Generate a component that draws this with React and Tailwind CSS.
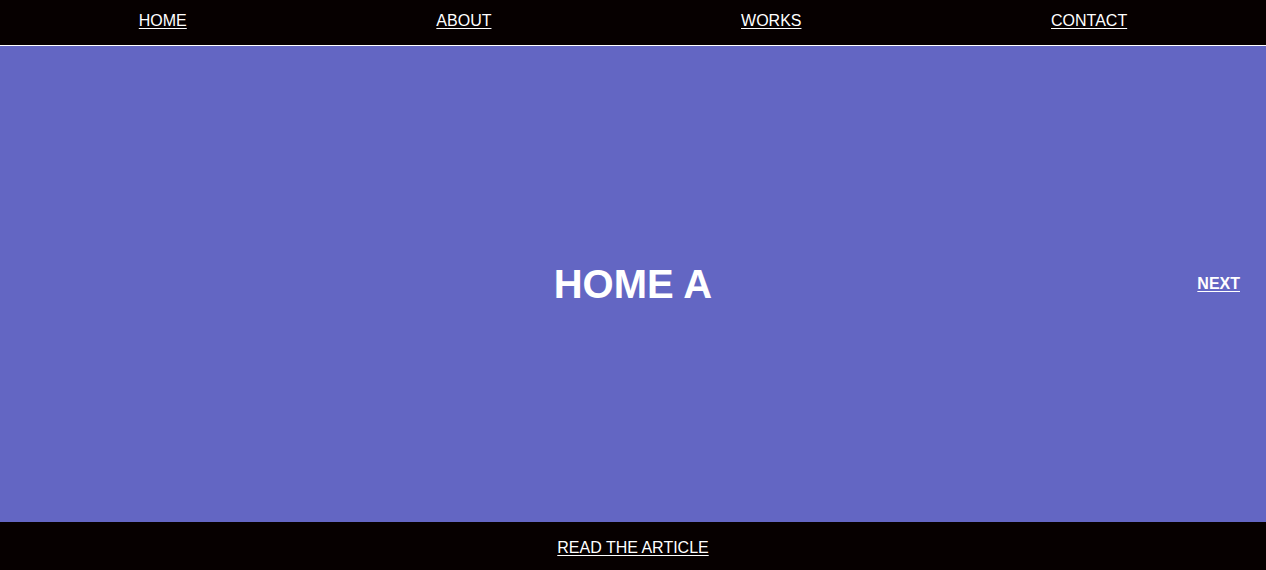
import React from 'react';

const links = ['HOME', 'ABOUT', 'WORKS', 'CONTACT'];

const App = () => {
  return (
    <div className="flex flex-col h-[570px] w-full font-['Liberation_Sans',Arial,sans-serif] text-white">
      {/* Top nav */}
      <nav className="h-[46px] shrink-0 bg-[#060000] border-b border-white">
        <ul className="flex h-full items-center justify-around px-[14px] pb-[3px]">
          {links.map((link) => (
            <li key={link}>
              <a href="#" className="text-base leading-6 underline underline-offset-2">
                {link}
              </a>
            </li>
          ))}
        </ul>
      </nav>

      {/* Slide */}
      <section className="relative flex flex-1 items-center justify-center bg-[#6366c3]">
        <h1 className="text-[40px] font-bold leading-none">HOME A</h1>
        <a href="#" className="absolute right-[26px] top-1/2 -translate-y-1/2 text-base leading-6 font-bold underline underline-offset-2">
          NEXT
        </a>
      </section>

      {/* Footer */}
      <footer className="h-[48px] shrink-0 flex items-center justify-center pt-[3px] bg-[#060000]">
        <a href="#" className="text-base leading-6 underline underline-offset-2">
          READ THE ARTICLE
        </a>
      </footer>
    </div>
  );
};

export default App;
